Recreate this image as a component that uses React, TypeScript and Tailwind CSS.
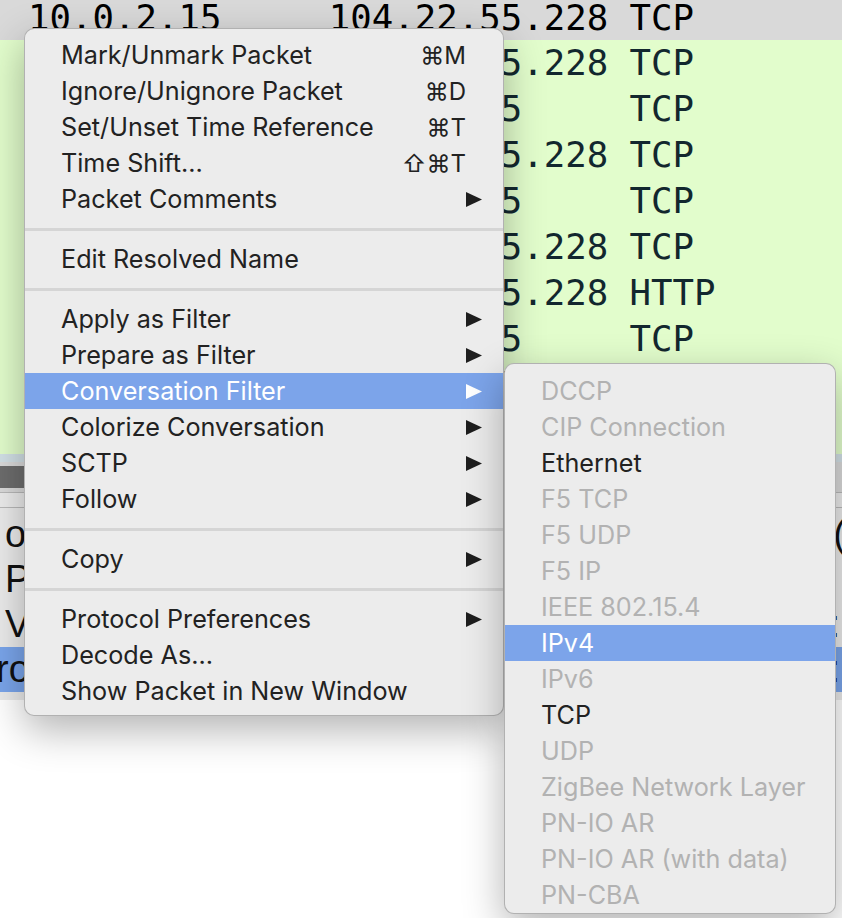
type MenuEntry =
    | { label: string; shortcut?: string; submenu?: boolean; active?: boolean }
    | 'sep'

const mainMenu: MenuEntry[] = [
    { label: 'Mark/Unmark Packet', shortcut: '⌘M' },
    { label: 'Ignore/Unignore Packet', shortcut: '⌘D' },
    { label: 'Set/Unset Time Reference', shortcut: '⌘T' },
    { label: 'Time Shift…', shortcut: '⇧⌘T' },
    { label: 'Packet Comments', submenu: true },
    'sep',
    { label: 'Edit Resolved Name' },
    'sep',
    { label: 'Apply as Filter', submenu: true },
    { label: 'Prepare as Filter', submenu: true },
    { label: 'Conversation Filter', submenu: true, active: true },
    { label: 'Colorize Conversation', submenu: true },
    { label: 'SCTP', submenu: true },
    { label: 'Follow', submenu: true },
    'sep',
    { label: 'Copy', submenu: true },
    'sep',
    { label: 'Protocol Preferences', submenu: true },
    { label: 'Decode As…' },
    { label: 'Show Packet in New Window' },
]

const conversationMenu = [
    { label: 'DCCP', enabled: false },
    { label: 'CIP Connection', enabled: false },
    { label: 'Ethernet', enabled: true },
    { label: 'F5 TCP', enabled: false },
    { label: 'F5 UDP', enabled: false },
    { label: 'F5 IP', enabled: false },
    { label: 'IEEE 802.15.4', enabled: false },
    { label: 'IPv4', enabled: true, active: true },
    { label: 'IPv6', enabled: false },
    { label: 'TCP', enabled: true },
    { label: 'UDP', enabled: false },
    { label: 'ZigBee Network Layer', enabled: false },
    { label: 'PN-IO AR', enabled: false },
    { label: 'PN-IO AR (with data)', enabled: false },
    { label: 'PN-CBA', enabled: false },
]

const CLIENT = '10.0.2.15'
const SERVER = '104.22.55.228'

const packets = [
    { src: CLIENT, dst: SERVER, proto: 'TCP' },
    { src: SERVER, dst: CLIENT, proto: 'TCP' },
    { src: CLIENT, dst: SERVER, proto: 'TCP' },
    { src: SERVER, dst: CLIENT, proto: 'TCP' },
    { src: CLIENT, dst: SERVER, proto: 'TCP' },
    { src: CLIENT, dst: SERVER, proto: 'HTTP' },
    { src: SERVER, dst: CLIENT, proto: 'TCP' },
    { src: SERVER, dst: CLIENT, proto: 'TCP' },
    { src: SERVER, dst: CLIENT, proto: 'HTTP' },
]

const rowText = (src: string, dst: string, proto: string) =>
    `${src.padEnd(14)}${dst.padEnd(14)}${proto}`

const SubmenuArrow = ({ white }: { white?: boolean }) => (
    <svg width="16" height="15" viewBox="0 0 16 15" className="shrink-0">
        <polygon points="0,0 16,7.5 0,15" fill={white ? '#ffffff' : '#1e1e1e'} />
    </svg>
)

const App = () => {
    return (
        <div className="relative w-[842px] h-[918px] overflow-hidden bg-white">
            {/* Packet list */}
            <div className="-mt-[6px] font-['DejaVu_Sans_Mono',monospace] text-[35.7px] whitespace-pre">
                <div className="h-[46px] leading-[46px] pl-[28px] pt-[1px] bg-[#d9d9d9] text-black">
                    {rowText(CLIENT, SERVER, 'TCP')}
                </div>
                {packets.map((p, i) => (
                    <div
                        key={i}
                        className="h-[46px] leading-[46px] pl-[28px] bg-[#e2fdcc] text-[#12272e]"
                    >
                        {rowText(p.src, p.dst, p.proto)}
                    </div>
                ))}
            </div>

            {/* Splitter / pane header */}
            <div className="h-[8px] bg-[#d2e0e6]" />
            <div className="h-[30px] bg-[#dadada] pt-[4px]">
                <div className="h-[22px] w-[300px] bg-[#6d6d6d]" />
            </div>
            <div className="h-[16px] bg-[#ececec] border-y border-[#b9b9b9]" />

            {/* Packet details */}
            <div className="pt-[4px] bg-[#ebebeb] font-['Liberation_Sans',Arial,sans-serif] text-[38px] text-[#111]">
                <div className="h-[45px] flex items-center pl-[5px]">
                    <span>o</span>
                    <span className="ml-auto -mr-[4px]">(</span>
                </div>
                <div className="h-[45px] flex items-center pl-[5px]">
                    <span>P</span>
                </div>
                <div className="h-[45px] flex items-center pl-[5px]">
                    <span>V</span>
                    <span className="ml-auto mr-[2px]">:</span>
                </div>
                <div className="h-[45px] flex items-center -ml-[4px] bg-[#7aa5eb]">
                    <span>ro</span>
                    <span className="ml-auto mr-[2px]">:</span>
                </div>
                <div className="h-[8px]" />
            </div>

            {/* Context menu */}
            <div className="absolute left-[24px] top-[28px] w-[480px] rounded-[10px] bg-[#ececec] border border-black/25 pt-[8px] pb-[6px] shadow-[0_14px_40px_rgba(0,0,0,0.3)] font-['Inter','Noto_Sans',sans-serif] text-[25.2px] text-[#222]">
                {mainMenu.map((entry, i) =>
                    entry === 'sep' ? (
                        <div key={i} className="h-[24px] flex items-center">
                            <div className="h-[3px] w-full bg-[#d5d5d5]" />
                        </div>
                    ) : (
                        <div
                            key={i}
                            className={`h-[36px] flex items-center pl-[36px] pr-[21px] pt-[1px] ${
                                entry.active ? 'bg-[#7ca4ea] text-white' : ''
                            }`}
                        >
                            <span className="flex-1 whitespace-nowrap">{entry.label}</span>
                            {entry.shortcut && (
                                <span className="mr-[16px] text-[24px] font-['Inter','DejaVu_Sans',sans-serif]">
                                    {entry.shortcut}
                                </span>
                            )}
                            {entry.submenu && <SubmenuArrow white={entry.active} />}
                        </div>
                    )
                )}
            </div>

            {/* Conversation Filter submenu */}
            <div className="absolute left-[504px] top-[363px] w-[332px] rounded-[10px] bg-[#ececec] border border-black/25 pt-[9px] shadow-[0_14px_40px_rgba(0,0,0,0.3)] font-['Inter','Noto_Sans',sans-serif] text-[25.2px]">
                {conversationMenu.map((item) => (
                    <div
                        key={item.label}
                        className={`h-[36px] flex items-center pl-[36px] pt-[1px] whitespace-nowrap ${
                            item.active
                                ? 'bg-[#7ca4ea] text-white'
                                : item.enabled
                                  ? 'text-[#222]'
                                  : 'text-[#b2b2b2]'
                        }`}
                    >
                        {item.label}
                    </div>
                ))}
            </div>
        </div>
    )
}

export default App
